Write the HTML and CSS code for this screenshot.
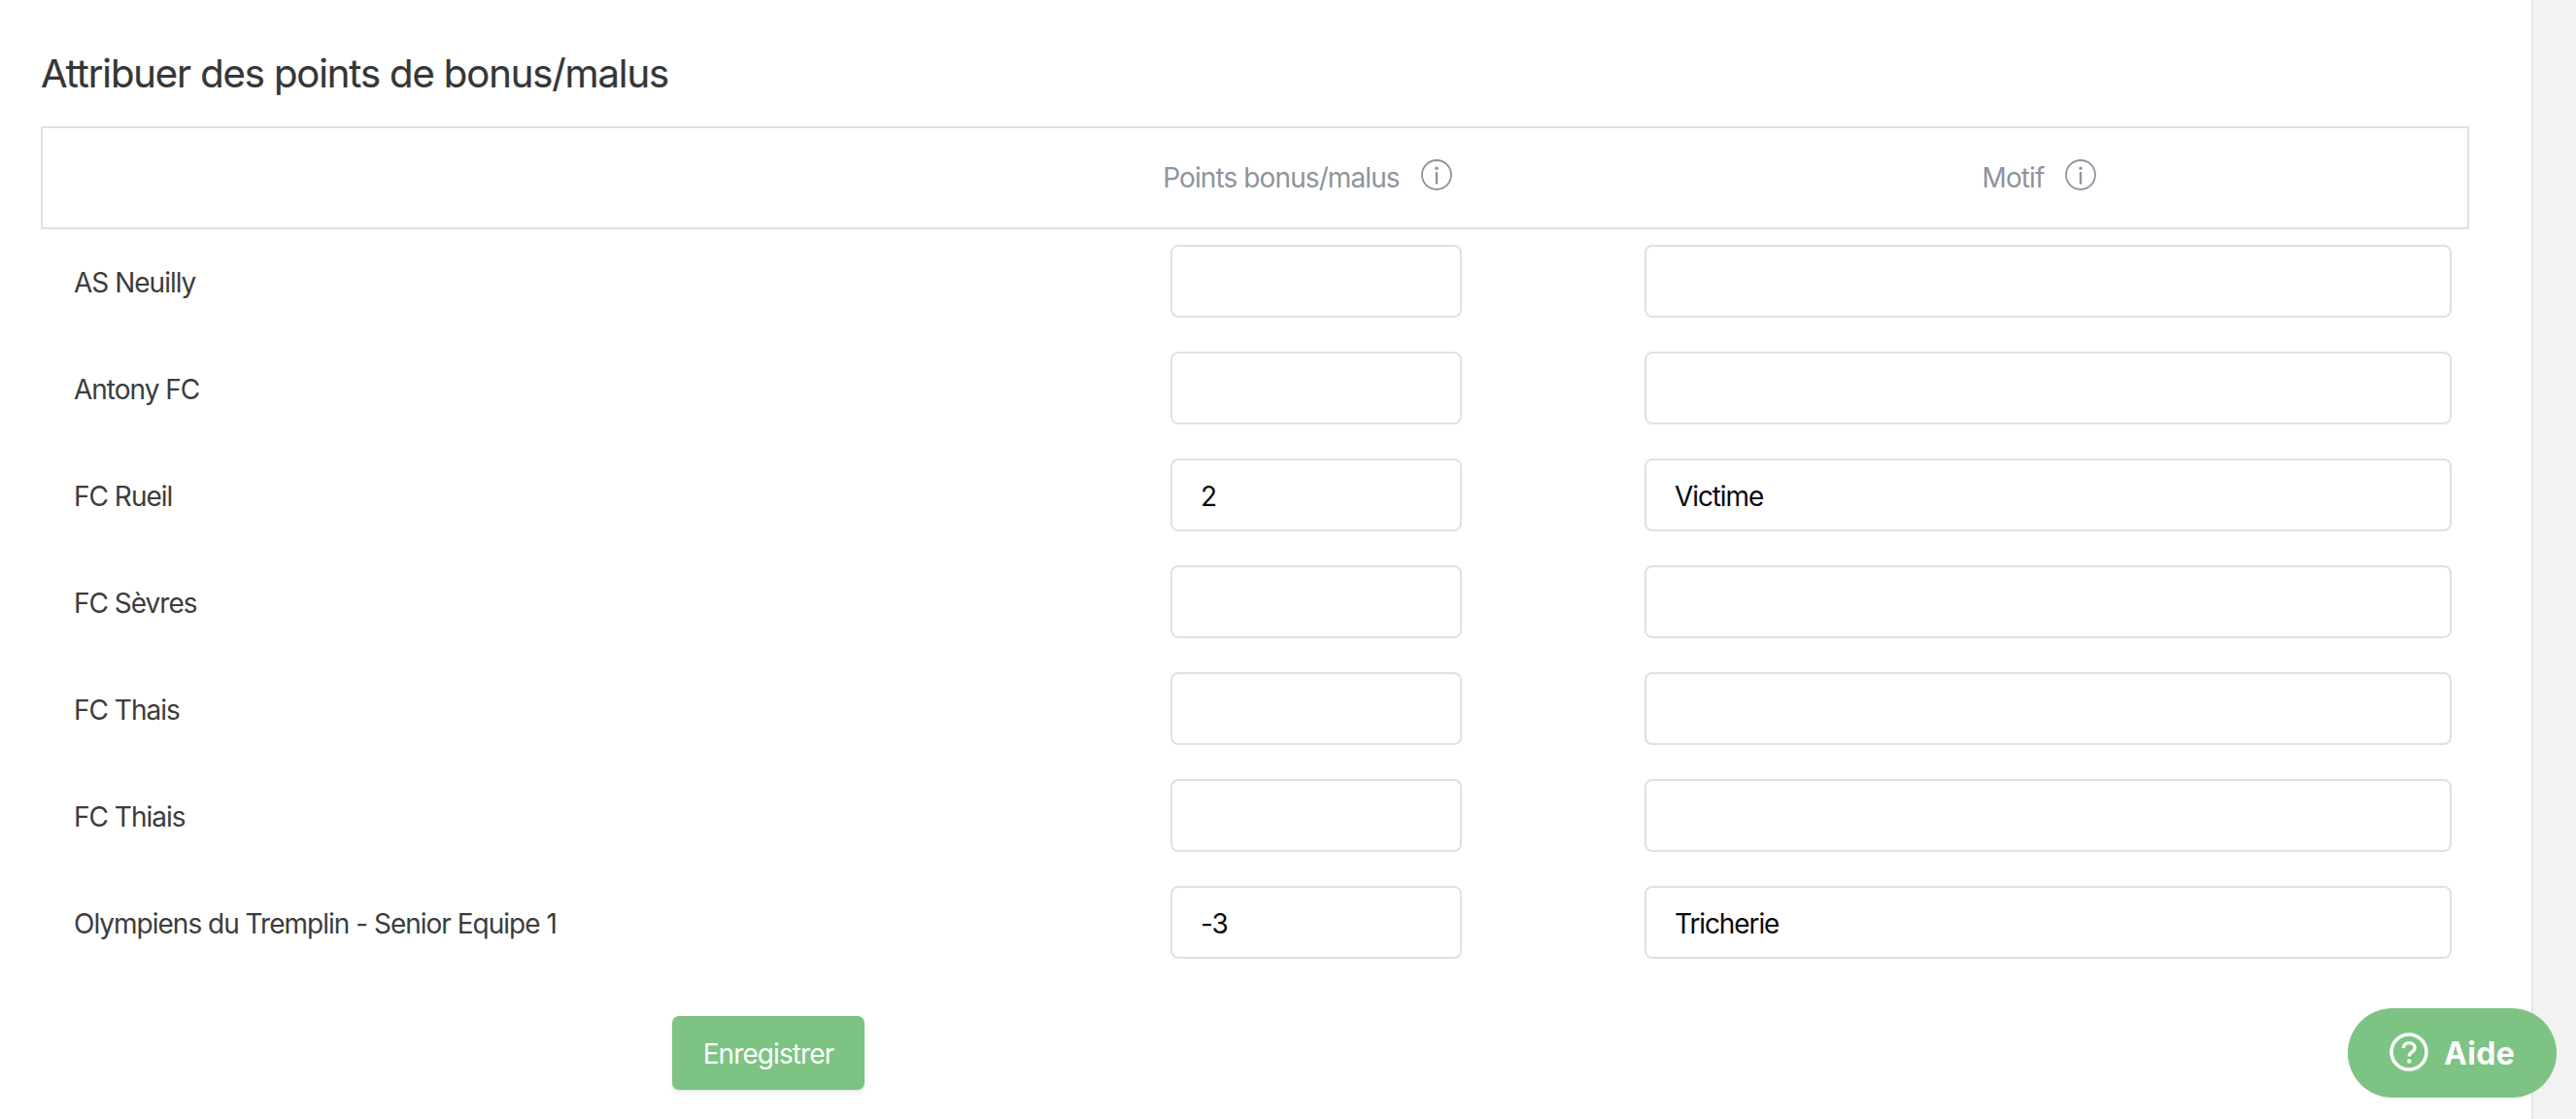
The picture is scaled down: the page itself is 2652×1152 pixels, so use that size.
FILE: index.html
```html
<!DOCTYPE html>
<html lang="fr">
<head>
<meta charset="utf-8">
<title>Attribuer des points de bonus/malus</title>
<link rel="stylesheet" href="styles.css">
</head>
<body>
<div class="page">
  <main class="main">
    <h1 class="title">Attribuer des points de bonus/malus</h1>
    <form class="form">
      <div class="head">
        <div></div>
        <div class="head-cell">Points bonus/malus
          <svg class="info" viewBox="0 0 32 32"><circle cx="16" cy="16" r="15" fill="none" stroke="#8f939c" stroke-width="1.8"/><circle cx="16" cy="9.200" r="1.700" fill="#8f939c"/><path d="M16 14v10.500" stroke="#8f939c" stroke-width="2.400" stroke-linecap="round"/></svg>
        </div>
        <div class="head-cell">Motif
          <svg class="info" viewBox="0 0 32 32"><circle cx="16" cy="16" r="15" fill="none" stroke="#8f939c" stroke-width="1.8"/><circle cx="16" cy="9.200" r="1.700" fill="#8f939c"/><path d="M16 14v10.500" stroke="#8f939c" stroke-width="2.400" stroke-linecap="round"/></svg>
        </div>
      </div>
      <div class="rows">
        <div class="row"><span class="name">AS Neuilly</span><input class="field" type="text"><input class="field" type="text"></div>
        <div class="row"><span class="name">Antony FC</span><input class="field" type="text"><input class="field" type="text"></div>
        <div class="row"><span class="name">FC Rueil</span><input class="field" type="text" value="2"><input class="field" type="text" value="Victime"></div>
        <div class="row"><span class="name">FC Sèvres</span><input class="field" type="text"><input class="field" type="text"></div>
        <div class="row"><span class="name">FC Thais</span><input class="field" type="text"><input class="field" type="text"></div>
        <div class="row"><span class="name">FC Thiais</span><input class="field" type="text"><input class="field" type="text"></div>
        <div class="row"><span class="name">Olympiens du Tremplin - Senior Equipe 1</span><input class="field" type="text" value="-3"><input class="field" type="text" value="Tricherie"></div>
      </div>
      <button class="save" type="button">Enregistrer</button>
    </form>
  </main>
  <aside class="side"></aside>
</div>
<button class="help" type="button">
  <svg class="help-icon" viewBox="0 0 40 40"><circle cx="20" cy="20" r="18" fill="none" stroke="#fff" stroke-width="3.6"/><path d="M14.2 16c.3-3.4 2.8-5.4 6-5.4 3.300 0 5.800 2 5.800 5 0 2.300-1.300 3.500-3 4.600-1.700 1.100-2.700 1.900-2.700 3.800v.6" fill="none" stroke="#fff" stroke-width="3.400"/><circle cx="20.300" cy="29.500" r="2.200" fill="#fff"/></svg>
  <span>Aide</span>
</button>
</body>
</html>
```
FILE: styles.css
```css
* { box-sizing: border-box; }
html, body { margin: 0; height: 100%; background: #fff; }
body { font-family: Inter, "Liberation Sans", sans-serif; overflow: hidden; }
.page { display: flex; height: 1152px; }
.main { flex: 1; padding: 0 64px 0 42px; min-width: 0; }
.side { width: 46px; background: #f2f2f2; border-left: 2px solid #e2e6ec; }
.title { margin: 0; height: 130px; padding-top: 52px; font-size: 40px; line-height: 48px; font-weight: 400; color: #363636; letter-spacing: -1.1px; -webkit-text-stroke: 0.2px #363636; }
.head { display: grid; grid-template-columns: 1fr 300px 831px; column-gap: 188px; height: 106px; padding: 0 25px 0 32px; border: 2px solid #dde1e8; }
.head-cell { display: flex; align-items: center; justify-content: center; gap: 22px; font-size: 28px; color: #8f939c; letter-spacing: -0.9px; white-space: nowrap; }
.info { width: 32px; height: 32px; flex: none; margin-bottom: 6px; }
.rows { display: flex; flex-direction: column; gap: 35px; margin-top: 16px; }
.row { display: grid; grid-template-columns: 1fr 300px 831px; column-gap: 188px; align-items: center; padding: 0 18px 0 34px; }
.name { padding-top: 2px; font-size: 28px; color: #3c3c3c; letter-spacing: -1px; }
.field { height: 75px; width: 100%; padding: 2px 28px 0 29px; border: 2px solid #dde1e8; border-radius: 8px; background: #fff; font-family: inherit; font-size: 28px; color: #0a0a0a; letter-spacing: -1.1px; outline: none; }
.save { display: block; width: 198px; height: 76px; margin: 59px 0 0 650px; border: 0; border-radius: 7px; background: #7dc383; color: #fff; font-family: inherit; font-size: 28px; letter-spacing: -0.9px; box-shadow: 0 3px 4px rgba(0,0,0,.08); padding: 2px 0 0; }
.help { position: fixed; right: 20px; bottom: 22px; display: flex; align-items: center; gap: 16px; width: 215px; height: 92px; padding: 0 0 0 43px; border: 0; border-radius: 46px; background: #7dc383; color: #fff; font-family: Inter, sans-serif; font-size: 32px; font-weight: 700; letter-spacing: .3px; }
.help-icon { width: 40px; height: 40px; flex: none; margin-bottom: 3px; }
```
